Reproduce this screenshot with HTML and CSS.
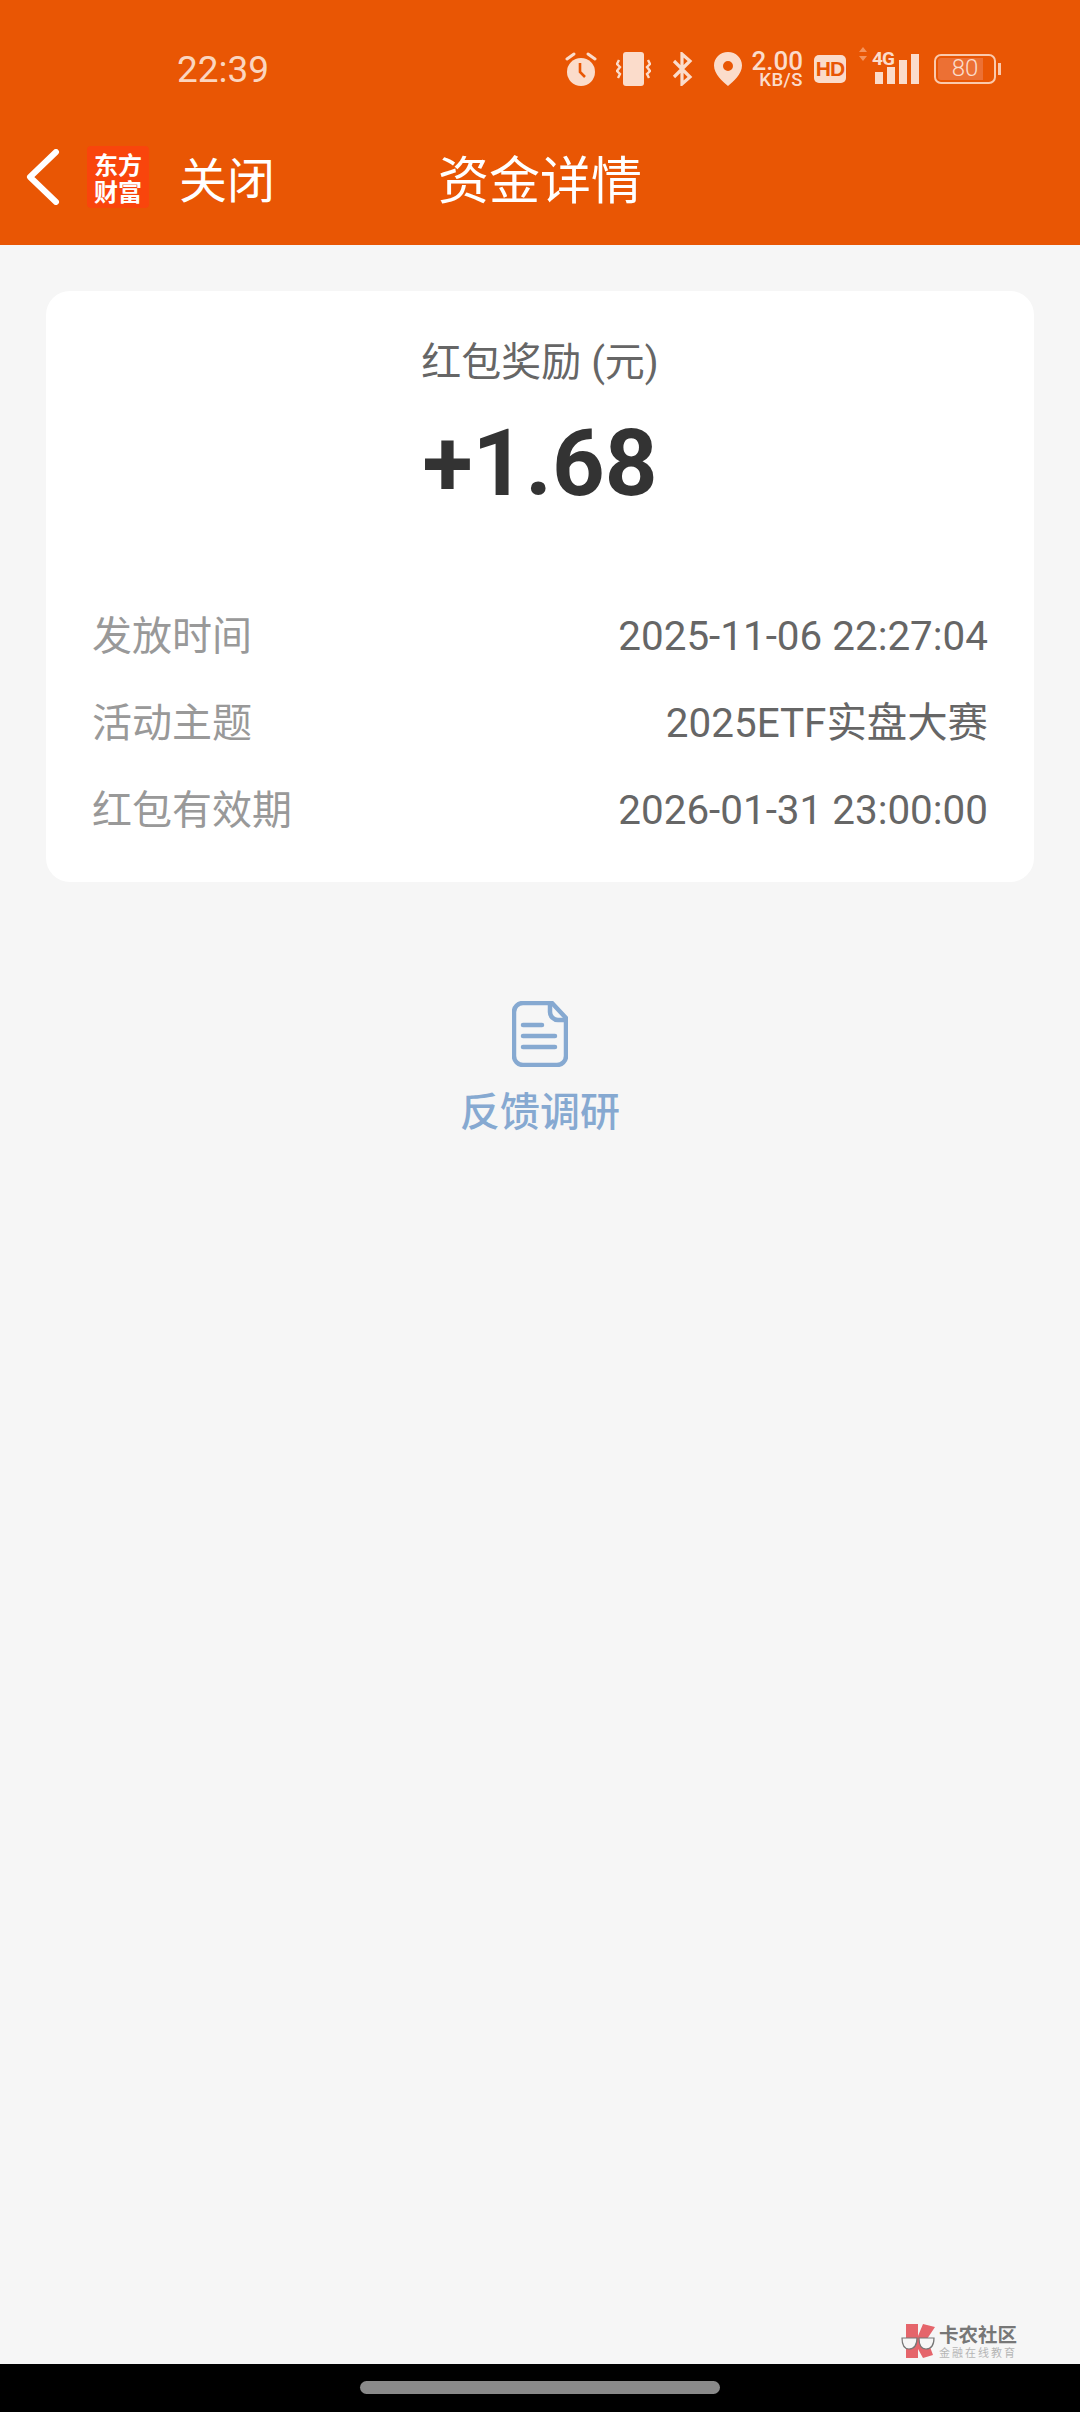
FILE: index.html
```html
<!DOCTYPE html>
<html lang="zh-CN">
<head>
  <meta charset="UTF-8">
  <meta name="viewport" content="width=device-width, initial-scale=1.0">
  <title>资金详情</title>
  <link rel="stylesheet" href="styles.css">
</head>
<body>
  <div class="screen">
    <div class="header">
      <!-- Status bar -->
      <div class="status-bar">
        <div class="status-time">22:39</div>
        <div class="status-icons">
          <svg class="icon-alarm" viewBox="0 0 32 34" width="32" height="34">
            <circle cx="16" cy="20" r="14" fill="#fbdccb"/>
            <path d="M15 11v9l5 5" fill="none" stroke="#e95604" stroke-width="2.600"/>
            <path d="M2 7l7-5M30 7l-7-5" stroke="#fbdccb" stroke-width="3" stroke-linecap="round"/>
          </svg>
          <svg class="icon-vibrate" viewBox="0 0 35 34" width="35" height="34">
            <rect x="7" y="0" width="21" height="34" rx="3" fill="#fbdccb"/>
            <path d="M3 8L1 12l3 3-3 4 3 3-2 4M32 8l2 4-3 3 3 4-3 3 2 4" fill="none" stroke="#fbdccb" stroke-width="2.400"/>
          </svg>
          <svg class="icon-bt" viewBox="0 0 21 34" width="21" height="34">
            <path d="M2 9l16 16-8 7V2l8 7L2 25" fill="none" stroke="#fbdccb" stroke-width="3.200"/>
          </svg>
          <svg class="icon-pin" viewBox="0 0 28 34" width="28" height="34">
            <path fill-rule="evenodd" d="M14 0c8 0 14 6 14 13.500C28 22 19 30 14 34 9 30 0 22 0 13.500 0 6 6 0 14 0zm0 9a5 5 0 1 0 0 10 5 5 0 0 0 0-10z" fill="#fbdccb"/>
          </svg>
          <div class="net-speed">
            <span class="net-value">2.00</span>
            <span class="net-unit">KB/S</span>
          </div>
          <div class="hd-badge">HD</div>
          <svg class="icon-arrows" viewBox="0 0 10 14" width="10" height="14">
            <path d="M5 0l4 5H1zM5 14L1 9h8z" fill="#f4935c"/>
          </svg>
          <div class="signal">
            <span class="signal-label">4G</span>
            <div class="signal-bars">
              <span class="bar bar-1"></span>
              <span class="bar bar-2"></span>
              <span class="bar bar-3"></span>
              <span class="bar bar-4"></span>
            </div>
          </div>
          <div class="battery">
            <div class="battery-body">80</div>
            <div class="battery-tip"></div>
          </div>
        </div>
      </div>

      <!-- Nav bar -->
      <div class="nav-bar">
        <svg class="nav-back" viewBox="0 0 34 56" width="34" height="56">
          <path d="M30 3L4 28l26 25" fill="none" stroke="#fff" stroke-width="6" stroke-linecap="round" stroke-linejoin="round"/>
        </svg>
        <div class="app-logo">东方<br>财富</div>
        <div class="nav-close">关闭</div>
        <div class="nav-title">资金详情</div>
      </div>
    </div>

    <div class="content">
      <div class="card">
        <div class="card-label">红包奖励 (元)</div>
        <div class="card-amount">+1.68</div>
        <div class="detail-list">
          <div class="detail-row"><span class="detail-name">发放时间</span><span class="detail-value">2025-11-06 22:27:04</span></div>
          <div class="detail-row"><span class="detail-name">活动主题</span><span class="detail-value">2025ETF实盘大赛</span></div>
          <div class="detail-row"><span class="detail-name">红包有效期</span><span class="detail-value">2026-01-31 23:00:00</span></div>
        </div>
      </div>

      <div class="feedback">
        <svg viewBox="0 0 56 66" width="56" height="66">
          <path d="M11 2h29l14 15v38a9 9 0 0 1-9 9H11a9 9 0 0 1-9-9V11a9 9 0 0 1 9-9z" fill="none" stroke="#86a9d1" stroke-width="4.500" stroke-linejoin="round"/>
          <path d="M38 3v8a8 8 0 0 0 8 8h7" fill="none" stroke="#86a9d1" stroke-width="4.500"/>
          <path d="M11 24h19M11 35h32M11 46h32" stroke="#86a9d1" stroke-width="4.500" stroke-linecap="round"/>
        </svg>
        <div class="feedback-text">反馈调研</div>
      </div>
    </div>

    <!-- Watermark -->
    <div class="watermark">
      <svg viewBox="0 0 34 34" width="34" height="34">
        <path d="M5 0h12v12L22 0l12 3-8 12 6 16-10 3-5-9v9H5z" fill="#e5656b"/>
        <path d="M1 14h15c0 7-3 11-8 11s-7-5-7-11zM18 14h15c0 7-3 11-8 11s-7-5-7-11z" fill="#f6f6f6" stroke="#777" stroke-width="1.200"/>
      </svg>
      <div class="watermark-text">
        <div class="watermark-name">卡农社区</div>
        <div class="watermark-sub">金融在线教育</div>
      </div>
    </div>

    <div class="home-bar">
      <div class="home-pill"></div>
    </div>
  </div>
</body>
</html>
```

FILE: styles.css
```css
body {
  font-family: Roboto, 'Noto Sans CJK SC', sans-serif;
  margin: 0;
  padding: 0;
  background-color: #f6f6f6;
}

.screen {
  position: relative;
  display: flex;
  flex-direction: column;
  width: 1080px;
  height: 2412px;
  overflow: hidden;
}

.header {
  height: 245px;
  flex-shrink: 0;
  background-color: #e95604;
  box-sizing: border-box;
}

/* Status bar */
.status-bar {
  height: 134px;
  box-sizing: border-box;
  padding: 4px 0 0 177px;
  display: flex;
  align-items: center;
}

.status-time {
  font-size: 37px;
  color: #fbd5bf;
}

.status-icons {
  margin-left: auto;
  margin-right: 79px;
  display: flex;
  align-items: center;
  color: #fbdccb;
}

.icon-alarm { margin-right: 19px; }
.icon-vibrate { margin-right: 21px; }
.icon-bt { margin-right: 21px; }
.icon-pin { margin-right: 11px; }
.icon-arrows { margin: -30px 4px 0 12px; }

.net-speed {
  display: flex;
  flex-direction: column;
  align-items: flex-end;
  width: 50px;
  margin-right: 11px;
  font-weight: 500;
  line-height: 1;
}

.net-value {
  font-size: 26px;
  height: 23px;
}

.net-unit {
  font-size: 18.500px;
  letter-spacing: 0.500px;
}

.hd-badge {
  width: 32px;
  height: 28px;
  border-radius: 5px;
  background-color: #fbdccb;
  color: #e95604;
  font-family: 'Liberation Sans', sans-serif;
  font-size: 21px;
  font-weight: bold;
  letter-spacing: -1px;
  line-height: 28px;
  text-align: center;
}

.signal {
  position: relative;
  width: 47px;
  height: 30px;
  margin-right: 15px;
}

.signal-label {
  position: absolute;
  left: 0;
  top: -2px;
  font-size: 19px;
  font-weight: bold;
  letter-spacing: -1px;
  line-height: 14px;
}

.signal-bars {
  display: flex;
  align-items: flex-end;
  gap: 4px;
  height: 100%;
  padding-left: 3px;
}

.bar {
  width: 8px;
  background-color: #fbdccb;
}

.bar-1 { height: 12px; }
.bar-2 { height: 17px; }
.bar-3 { height: 24px; }
.bar-4 { height: 30px; }

.battery {
  display: flex;
  align-items: center;
}

.battery-body {
  width: 62px;
  height: 30px;
  box-sizing: border-box;
  border: 2.500px solid #fbc9ac;
  border-radius: 7px;
  padding: 2px;
  background: linear-gradient(to right, #ec7034 83%, transparent 83%) content-box;
  font-size: 24px;
  font-weight: 300;
  line-height: 21px;
  text-align: center;
}

.battery-tip {
  width: 3px;
  height: 12px;
  margin-left: 2px;
  background-color: #fbc9ac;
}

/* Nav bar */
.nav-bar {
  position: relative;
  height: 86px;
  display: flex;
  align-items: center;
  padding-left: 26px;
}

.nav-back {
  margin-right: 27px;
}

.app-logo {
  width: 62px;
  height: 62px;
  background-color: #f9450c;
  border-radius: 4px;
  color: #fff;
  font-family: 'Noto Sans CJK SC', sans-serif;
  font-size: 24px;
  font-weight: bold;
  line-height: 27px;
  padding-top: 4px;
  box-sizing: border-box;
  text-align: center;
  margin-right: 30px;
}

.nav-close {
  color: #fff;
  font-size: 48px;
}

.nav-title {
  position: absolute;
  left: 0;
  right: 0;
  text-align: center;
  color: #fff;
  font-size: 51px;
}

/* Card */
.content {
  flex: 1;
  padding: 46px 46px 0;
}

.card {
  height: 591px;
  box-sizing: border-box;
  background-color: #ffffff;
  border-radius: 24px;
  padding: 0 46px;
}

.card-label {
  padding-top: 44px;
  text-align: center;
  font-size: 40px;
  line-height: 56px;
  color: #666666;
}

.card-amount {
  margin-top: 19px;
  text-align: center;
  font-size: 92px;
  font-weight: bold;
  line-height: 108px;
  color: #333333;
}

.detail-list {
  margin-top: 75px;
}

.detail-row {
  height: 87px;
  display: flex;
  justify-content: space-between;
  align-items: baseline;
  line-height: 87px;
}

.detail-name {
  font-size: 40px;
  color: #999999;
}

.detail-value {
  font-size: 40.400px;
  color: #666666;
}

/* Feedback link */
.feedback {
  display: flex;
  flex-direction: column;
  align-items: center;
  margin-top: 119px;
}

.feedback-text {
  margin-top: 18px;
  font-size: 40px;
  font-weight: 500;
  line-height: 56px;
  color: #86a9d1;
}

/* Watermark */
.watermark {
  position: absolute;
  right: 63px;
  bottom: 53px;
  display: flex;
  align-items: center;
  gap: 4px;
}

.watermark-name {
  font-family: 'Noto Sans CJK SC', sans-serif;
  font-size: 19.500px;
  font-weight: bold;
  line-height: 22px;
  color: #777777;
}

.watermark-sub {
  font-family: 'Noto Sans CJK SC', sans-serif;
  font-size: 11px;
  letter-spacing: 2px;
  line-height: 14px;
  color: #b5b5b5;
}

.home-bar {
  height: 48px;
  flex-shrink: 0;
  background-color: #000000;
  display: flex;
  justify-content: center;
  padding-top: 17px;
  box-sizing: border-box;
}

.home-pill {
  width: 360px;
  height: 13px;
  border-radius: 7px;
  background-color: #8a8a8a;
}
```
